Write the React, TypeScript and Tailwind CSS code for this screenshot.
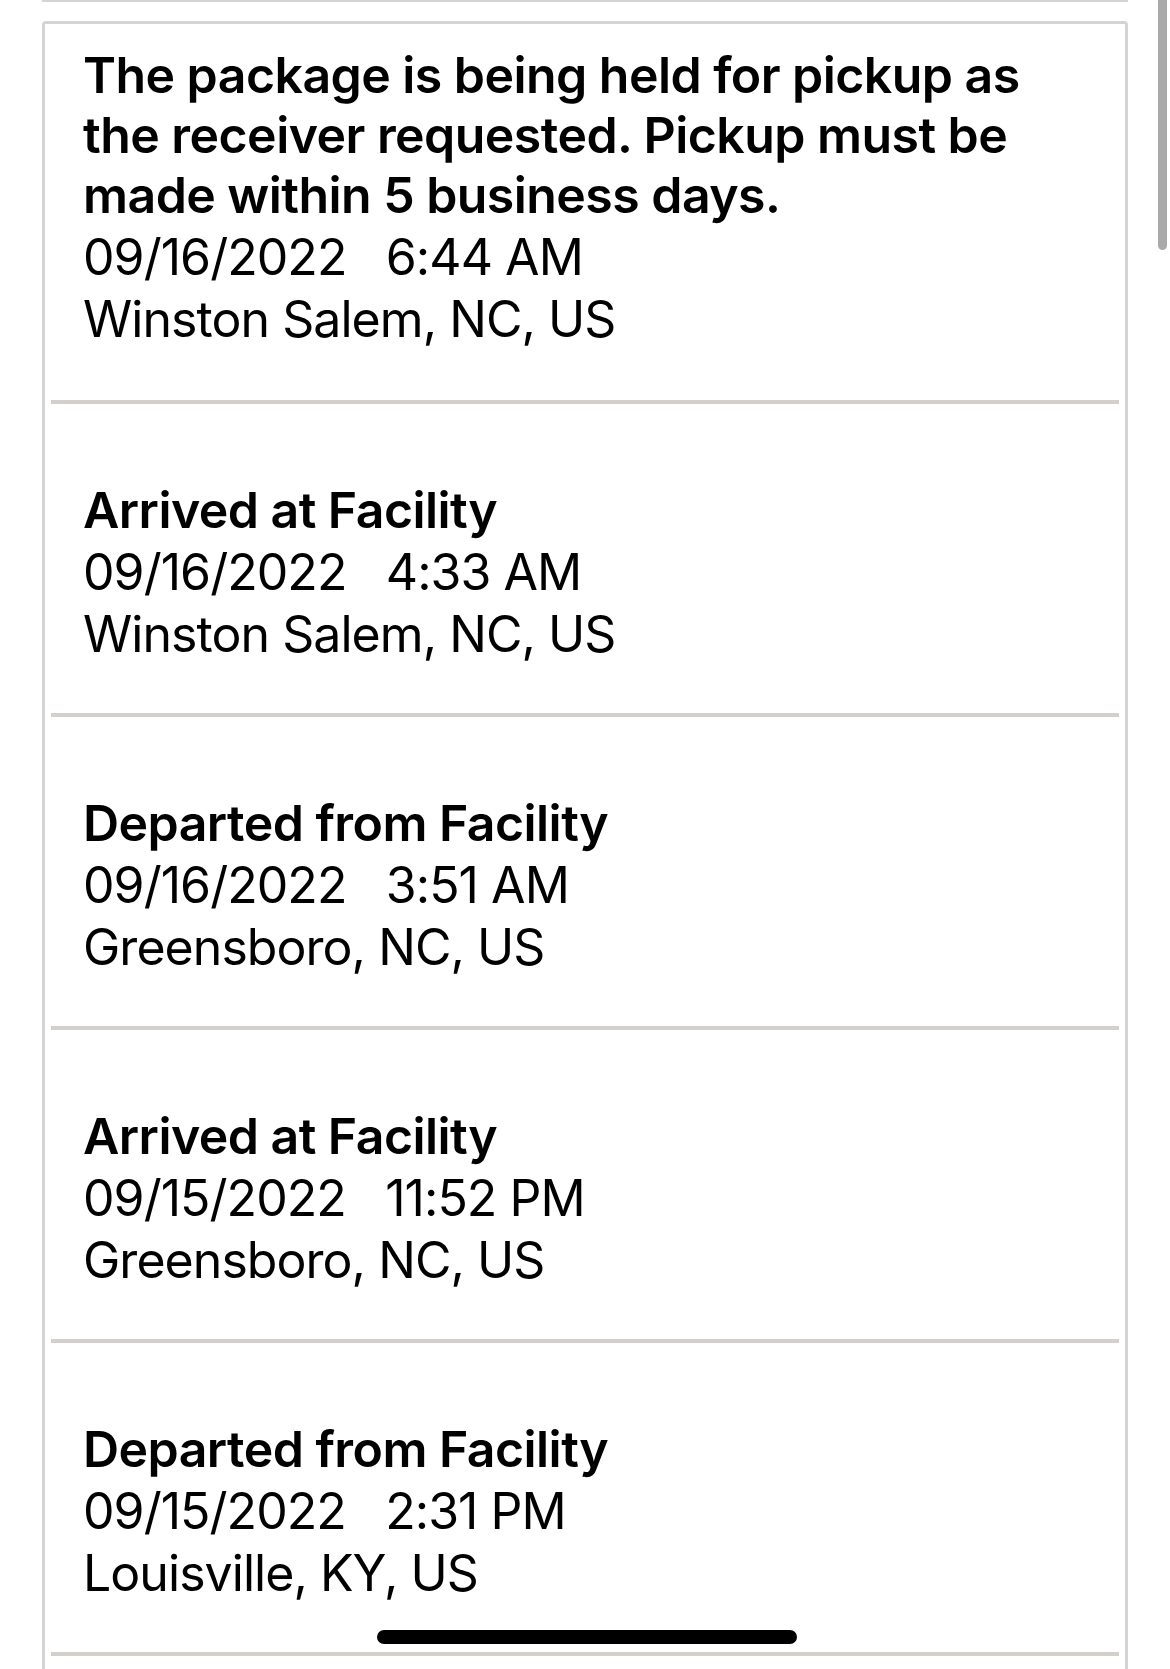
import React from "react"

type Scan = {
    title: string
    date: string
    time: string
    place: string
}

const scans: Scan[] = [
    {
        title: "The package is being held for pickup as the receiver requested. Pickup must be made within 5 business days.",
        date: "09/16/2022",
        time: "6:44 AM",
        place: "Winston Salem, NC, US",
    },
    { title: "Arrived at Facility", date: "09/16/2022", time: "4:33 AM", place: "Winston Salem, NC, US" },
    { title: "Departed from Facility", date: "09/16/2022", time: "3:51 AM", place: "Greensboro, NC, US" },
    { title: "Arrived at Facility", date: "09/15/2022", time: "11:52 PM", place: "Greensboro, NC, US" },
    { title: "Departed from Facility", date: "09/15/2022", time: "2:31 PM", place: "Louisville, KY, US" },
]

function ScanRow ({ scan, first }: { scan: Scan, first: boolean }) {
    return (
        <div>
            <div className={first ? "pl-[38px] pr-[60px] pt-[21px] pb-[50px]" : "pl-[38px] pr-[60px] pt-[76px] pb-[48px]"}>
                <p className="text-[50px] leading-[60px] font-semibold tracking-[-0.55px]">{scan.title}</p>
                <p className="mt-[2px] text-[50px] leading-[61px] font-normal whitespace-pre tracking-[-0.95px]">{scan.date + "   " + scan.time}</p>
                <p className="mt-[1px] text-[50px] leading-[61px] font-normal tracking-[-0.95px]">{scan.place}</p>
            </div>
            <div className="mx-[6px] h-[4px] bg-[#d3cfca]" />
        </div>
    )
}

export default function App () {
    return (
        <div className="relative h-[1669px] w-full overflow-hidden bg-white text-black font-['Inter','Noto_Sans',sans-serif]">
            <div className="mx-[42px] h-[2px] bg-[#d4d4d4]" />
            <div className="mx-[42px] mt-[19px] rounded-[4px] border-[3px] border-[#d4d4d4] pb-[200px]">
                {scans.map((scan, i) => (
                    <ScanRow key={i} scan={scan} first={i === 0} />
                ))}
            </div>

            {/* iOS scroll indicator */}
            <div className="absolute top-0 right-[3px] w-[9px] h-[250px] rounded-b-full bg-[#a9a9a9]" />
            {/* home indicator */}
            <div className="absolute top-[1630px] left-[377px] w-[420px] h-[14px] rounded-full bg-black" />
        </div>
    )
}
